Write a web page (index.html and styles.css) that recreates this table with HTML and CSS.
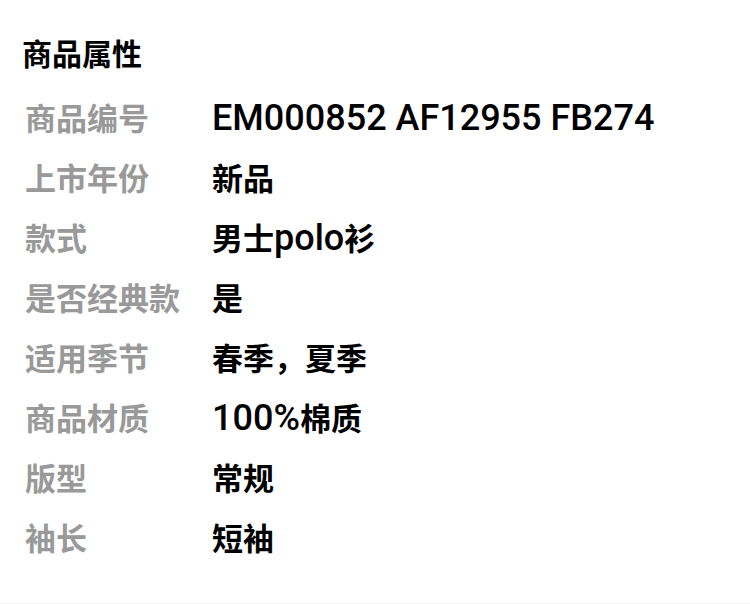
FILE: index.html
```html
<!DOCTYPE html>
<html lang="zh-CN">
<head>
    <meta charset="UTF-8">
    <meta name="viewport" content="width=device-width, initial-scale=1.0">
    <title>商品属性</title>
    <link rel="stylesheet" href="styles.css">
</head>
<body>
    <div class="attrs">
        <h2 class="attrs-title">商品属性</h2>
        <div class="attr-list">
            <div class="attr-row"><span class="attr-label">商品编号</span><span class="attr-value"><span class="latin">EM000852 AF12955 FB274</span></span></div>
            <div class="attr-row"><span class="attr-label">上市年份</span><span class="attr-value">新品</span></div>
            <div class="attr-row"><span class="attr-label">款式</span><span class="attr-value">男士<span class="latin">polo</span>衫</span></div>
            <div class="attr-row"><span class="attr-label">是否经典款</span><span class="attr-value">是</span></div>
            <div class="attr-row"><span class="attr-label">适用季节</span><span class="attr-value">春季，夏季</span></div>
            <div class="attr-row"><span class="attr-label">商品材质</span><span class="attr-value"><span class="latin">100%</span>棉质</span></div>
            <div class="attr-row"><span class="attr-label">版型</span><span class="attr-value">常规</span></div>
            <div class="attr-row"><span class="attr-label">袖长</span><span class="attr-value">短袖</span></div>
        </div>
    </div>
    <div class="footer"></div>
</body>
</html>
```

FILE: styles.css
```css
body {
    margin: 0;
    background: #ffffff;
    font-family: "Noto Sans CJK SC", "Noto Sans", sans-serif;
    color: #000000;
}
.attrs {
    height: 603px;
    box-sizing: border-box;
    padding: 34px 0 0 22px;
}
.attrs-title {
    margin: 0;
    font-size: 30px;
    font-weight: 700;
    line-height: 36px;
}
.attr-list {
    margin-top: 17px;
    padding-left: 3px;
}
.attr-row {
    display: flex;
    align-items: center;
    height: 60px;
    font-size: 31px;
    line-height: 40px;
}
.attr-label {
    width: 187px;
    flex-shrink: 0;
    color: #999999;
    font-weight: 700;
}
.attr-value {
    font-weight: 700;
    white-space: nowrap;
}
.latin {
    font-family: Roboto, "Liberation Sans", sans-serif;
    font-size: 36px;
    font-weight: 500;
}
.footer {
    height: 1px;
    background: #f2f2f2;
}
```
